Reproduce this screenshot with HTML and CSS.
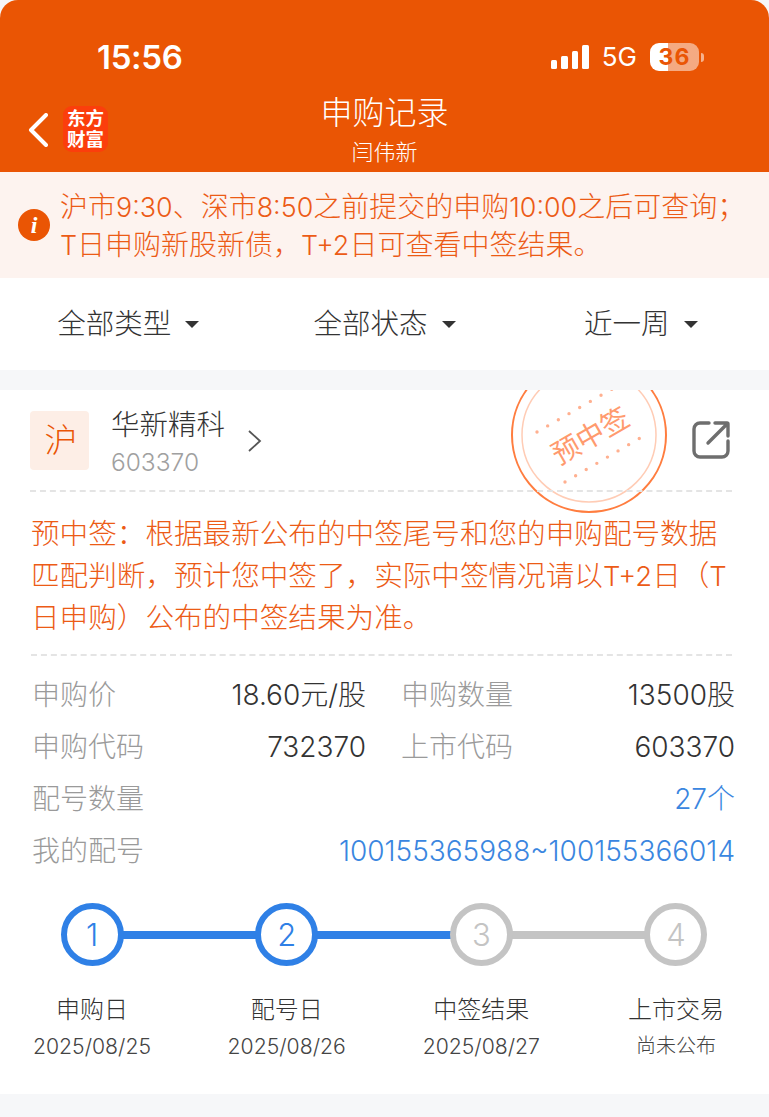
FILE: index.html
```
<!DOCTYPE html>
<html lang="zh-CN">
<head>
<meta charset="utf-8">
<title>申购记录</title>
<link rel="stylesheet" href="styles.css">
</head>
<body>
<header class="header">
  <div class="status">
    <span class="time">15:56</span>
    <div class="status-right">
      <div class="signal"><i class="b1"></i><i class="b2"></i><i class="b3"></i><i class="b4"></i></div>
      <span class="net">5G</span>
      <div class="battery"><span class="battery-text">36</span></div>
      <i class="battery-tip"></i>
    </div>
  </div>
  <div class="nav">
    <svg class="back" width="20" height="34" viewBox="0 0 20 34"><path d="M18 2 3 17l15 15" fill="none" stroke="#fff" stroke-width="4" stroke-linecap="round" stroke-linejoin="round"/></svg>
    <div class="logo"><span>东方</span><span>财富</span></div>
    <div class="nav-title">
      <div class="title">申购记录</div>
      <div class="subtitle">闫伟新</div>
    </div>
  </div>
</header>
<section class="notice">
  <span class="info-icon">i</span>
  <p class="notice-text">沪市<span class="num-tight">9:30</span>、深市<span class="num-tight">8:50</span>之前提交的申购<span class="num-tight">10:00</span>之后可查询；<br><span class="num-tight">T</span>日申购新股新债，<span class="num-tight">T+2</span>日可查看中签结果。</p>
</section>
<nav class="filters">
  <div class="filter">全部类型<i class="caret"></i></div>
  <div class="filter">全部状态<i class="caret"></i></div>
  <div class="filter">近一周<i class="caret"></i></div>
</nav>
<main class="card">
  <svg class="stamp" width="170" height="170" viewBox="0 0 170 170">
    <circle cx="85" cy="85" r="77" fill="none" stroke="#ff7d3f" stroke-width="2"/>
    <circle cx="85" cy="85" r="67" fill="none" stroke="#ffccb5" stroke-width="1.5"/>
    <path d="M33 82 108 39M61 132 136 88" fill="none" stroke="#ffb090" stroke-width="3.4" stroke-linecap="round" stroke-dasharray="0 12.3"/>
    <text class="stamp-text" x="86" y="96" text-anchor="middle" transform="rotate(-30 86 85)">预中签</text>
  </svg>
  <div class="stock">
    <div class="market">沪</div>
    <div class="stock-info">
      <div class="stock-name">华新精科</div>
      <div class="stock-code">603370</div>
    </div>
    <svg class="chevron" width="16" height="24" viewBox="0 0 16 24"><path d="M2 2l11 10L2 22" fill="none" stroke="#555" stroke-width="1.8"/></svg>
    <svg class="share" width="40" height="40" viewBox="0 0 40 40"><path d="M18 3H9a6 6 0 0 0-6 6v22a6 6 0 0 0 6 6h22a6 6 0 0 0 6-6v-10M17 23 36 4M24 3h12a1 1 0 0 1 1 1v12" fill="none" stroke="#6e6e6e" stroke-width="3.4" stroke-linecap="round" stroke-linejoin="round"/></svg>
  </div>
  <p class="explain">预中签：根据最新公布的中签尾号和您的申购配号数据匹配判断，预计您中签了，实际中签情况请以<span class="num-tight">T+2</span>日（<span class="num-tight">T</span>日申购）公布的中签结果为准。</p>
  <div class="details">
    <div class="row">
      <div class="pair"><span class="label">申购价</span><span class="value">18.60元/股</span></div>
      <div class="pair"><span class="label">申购数量</span><span class="value">13500股</span></div>
    </div>
    <div class="row">
      <div class="pair"><span class="label">申购代码</span><span class="value">732370</span></div>
      <div class="pair"><span class="label">上市代码</span><span class="value">603370</span></div>
    </div>
    <div class="row">
      <div class="pair"><span class="label">配号数量</span><span class="value blue">27个</span></div>
    </div>
    <div class="row">
      <div class="pair"><span class="label">我的配号</span><span class="value blue">100155365988~100155366014</span></div>
    </div>
  </div>
  <ol class="steps">
    <li class="step done line-done"><span class="dot">1</span><span class="step-name">申购日</span><span class="step-date">2025/08/25</span></li>
    <li class="step done line-done"><span class="dot">2</span><span class="step-name">配号日</span><span class="step-date">2025/08/26</span></li>
    <li class="step line-todo"><span class="dot">3</span><span class="step-name">中签结果</span><span class="step-date">2025/08/27</span></li>
    <li class="step"><span class="dot">4</span><span class="step-name">上市交易</span><span class="step-date small">尚未公布</span></li>
  </ol>
</main>
</body>
</html>
```
FILE: styles.css
```
* { box-sizing: border-box; }
html, body { margin: 0; padding: 0; }
body {
  width: 769px;
  height: 1117px;
  overflow: hidden;
  background: #f6f7f9;
  font-family: Inter, "Noto Sans CJK SC", sans-serif;
  font-weight: 300;
  color: #333;
}
p { margin: 0; }
i { display: block; }
.num-tight { font-size: .96em; }

.header {
  height: 172px;
  background: #ea5504;
  border-radius: 18px 18px 0 0;
  color: #fff;
}
.status {
  height: 90px;
  padding: 37px 0 0 97px;
  display: flex;
  justify-content: space-between;
}
.time { font-size: 33px; line-height: 40px; font-weight: 600; letter-spacing: -.3px; }
.status-right { display: flex; align-items: center; height: 40px; padding-right: 65px; }
.signal { display: flex; align-items: flex-end; gap: 4px; width: 38px; height: 24px; margin-right: 13px; }
.signal i { width: 6.5px; background: #fff; border-radius: 1.5px; }
.b1 { height: 9px; }
.b2 { height: 13px; }
.b3 { height: 18px; }
.b4 { height: 24px; }
.net { font-size: 26px; line-height: 40px; margin-right: 13px; font-weight: 400; }
.battery {
  width: 49px;
  height: 28px;
  border-radius: 9px;
  background: linear-gradient(90deg, #fff 36%, rgba(255,255,255,.5) 36%);
  display: flex;
  align-items: center;
  justify-content: center;
}
.battery-text { color: #ea5504; font-size: 23px; line-height: 28px; font-weight: 700; letter-spacing: 1px; }
.battery-tip { width: 3px; height: 9px; margin-left: 2px; background: rgba(255,255,255,.55); border-radius: 0 3px 3px 0; }

.nav { position: relative; height: 82px; display: flex; justify-content: center; }
.back { position: absolute; left: 28px; top: 23px; }
.logo {
  position: absolute;
  left: 63px;
  top: 16px;
  width: 45px;
  height: 46px;
  background: #fb3e0c;
  border-radius: 9px;
  display: flex;
  flex-direction: column;
  align-items: center;
  justify-content: center;
  font-size: 18.5px;
  line-height: 21px;
  font-weight: 700;
}
.nav-title { text-align: center; }
.title { font-size: 32px; line-height: 46px; }
.subtitle { font-size: 22px; line-height: 32px; }

.notice {
  height: 106px;
  background: #fdf3ef;
  display: flex;
  align-items: center;
  padding-left: 18px;
  color: #ec5b16;
}
.info-icon {
  width: 32px;
  height: 32px;
  border-radius: 50%;
  background: #ea5504;
  color: #fff;
  font: italic 700 24px/32px "Liberation Serif", serif;
  text-align: center;
  flex: none;
}
.notice-text { font-size: 28px; line-height: 38px; margin: 2px 0 0 10px; white-space: nowrap; }

.filters {
  height: 92px;
  background: #fff;
  display: grid;
  grid-template-columns: repeat(3, 1fr);
  align-items: center;
  margin-bottom: 20px;
}
.filter { display: flex; justify-content: center; align-items: center; font-size: 28.5px; line-height: 40px; height: 40px; color: #333; }
.caret {
  width: 0;
  height: 0;
  margin-left: 14px;
  border-left: 7px solid transparent;
  border-right: 7px solid transparent;
  border-top: 7px solid #333;
}

.card {
  position: relative;
  height: 704px;
  background: #fff;
  overflow: hidden;
}
.stamp { position: absolute; left: 504px; top: -40px; }
.stamp-text { font-size: 28px; fill: #ff9a6e; font-weight: 400; }

.stock {
  margin: 0 37px 0 30px;
  height: 102px;
  padding-top: 21px;
  border-bottom: 2px dashed #e4e4e4;
  display: flex;
  align-items: flex-start;
  position: relative;
}
.market {
  width: 59px;
  height: 59px;
  padding-left: 3px;
  background: #fdeee6;
  border-radius: 4px;
  color: #ea5504;
  font-size: 33px;
  line-height: 59px;
  text-align: center;
}
.stock-info { margin-left: 22px; margin-top: -7px; }
.stock-name { font-size: 28.5px; line-height: 42px; color: #333; }
.stock-code { font-size: 24.5px; line-height: 32px; color: #a0a0a0; }
.chevron { margin: 18px 0 0 22px; }
.share { margin: 9px 0 0 auto; position: relative; right: 1px; }

.explain {
  margin: 0 37px 0 31px;
  padding: 21px 0 17px;
  height: 164px;
  font-size: 28.6px;
  line-height: 42px;
  color: #ec5b16;
  border-bottom: 2px dashed #e4e4e4;
}

.details { padding: 13px 34px 0 32px; }
.row { display: flex; gap: 35px; height: 52px; align-items: center; }
.pair { flex: 1; display: flex; justify-content: space-between; font-size: 28px; line-height: 52px; }
.label { color: #9a9a9a; }
.value { color: #333; }
.blue { color: #3a86e0; }

.steps {
  list-style: none;
  margin: 26px 34px 0 33px;
  padding: 0;
  display: flex;
  justify-content: space-between;
}
.step {
  position: relative;
  width: 118px;
  display: flex;
  flex-direction: column;
  align-items: center;
}
.step.line-done::after, .step.line-todo::after {
  content: "";
  position: absolute;
  left: 59px;
  top: 28px;
  width: 195px;
  height: 8px;
  background: #2f80e6;
}
.step.line-todo::after { background: #c4c4c4; }
.dot {
  position: relative;
  z-index: 1;
  width: 63px;
  height: 63px;
  border-radius: 50%;
  border: 6px solid #c4c4c4;
  background: #fff;
  color: #c4c4c4;
  font-size: 31px;
  line-height: 51px;
  text-align: center;
}
.step.done .dot { border-color: #2f80e6; color: #2f80e6; }
.step-name { font-size: 24px; line-height: 34px; margin-top: 27px; color: #333; white-space: nowrap; }
.step-date { font-size: 21.2px; line-height: 34px; margin-top: 2px; color: #444; white-space: nowrap; }
.step-date.small { font-size: 20px; }
```
